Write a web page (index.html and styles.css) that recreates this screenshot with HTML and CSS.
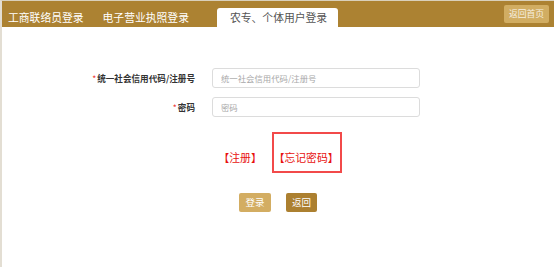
FILE: index.html
```html
<!DOCTYPE html>
<html lang="zh">
<head>
<meta charset="utf-8">
<link rel="stylesheet" href="styles.css">
</head>
<body>
<div class="page">
  <div class="topbar">
    <div class="tab tab-first">工商联络员登录</div>
    <div class="tab tab-second">电子营业执照登录</div>
    <div class="tab tab-active">农专、个体用户登录</div>
    <div class="spacer"></div>
    <button class="home-btn">返回首页</button>
  </div>
  <div class="content">
    <div class="form">
      <label class="label"><span class="req">*</span>统一社会信用代码/注册号</label>
      <input class="field" type="text" placeholder="统一社会信用代码/注册号">
      <label class="label"><span class="req">*</span>密码</label>
      <input class="field" type="password" placeholder="密码">
    </div>
    <div class="links">
      <a class="link">【注册】</a>
      <a class="link link-boxed">【忘记密码】</a>
    </div>
    <div class="actions">
      <button class="btn btn-login">登录</button>
      <button class="btn btn-back">返回</button>
    </div>
  </div>
</div>
</body>
</html>
```

FILE: styles.css
```css
* { box-sizing: border-box; }
html, body {
  margin: 0;
  padding: 0;
  background: #fff;
  font-family: "Noto Sans CJK SC", "Noto Sans", sans-serif;
}
.page {
  width: 554px;
  height: 267px;
  border-top: 1px solid #d9d0bb;
  border-left: 2px solid #e3ded3;
  overflow: hidden;
}
.topbar {
  height: 26px;
  margin-left: -2px;
  background: #ac8232;
  display: flex;
  align-items: flex-end;
}
.tab {
  font-size: 10.8px;
  line-height: 19px;
  height: 19px;
  color: #fff;
  white-space: nowrap;
}
.tab-first { margin-left: 8px; }
.tab-second { margin-left: 19px; }
.tab-active {
  margin-left: 28px;
  padding: 0 11px 0 13px;
  background: #fff;
  color: #555;
  border-radius: 3px 3px 0 0;
}
.spacer { flex: 1; }
.home-btn {
  align-self: flex-start;
  margin: 4px 5px 0 0;
  width: 45px;
  height: 18px;
  padding: 0;
  border: none;
  border-radius: 2px;
  background: #d1ad62;
  color: #f6efe0;
  font-family: inherit;
  font-size: 8.8px;
  line-height: 18px;
}
.content {
  padding-top: 41px;
}
.form {
  display: grid;
  grid-template-columns: 193px 208px;
  column-gap: 17px;
  row-gap: 9px;
  align-items: center;
}
.label {
  text-align: right;
  font-size: 8.6px;
  font-weight: bold;
  color: #333;
}
.req {
  color: #e33;
  font-weight: normal;
  margin-right: 1px;
}
.field {
  height: 20px;
  border: 1px solid #dcdcdc;
  border-radius: 3px;
  padding: 0 8px;
  font-family: inherit;
  font-size: 8.4px;
  color: #333;
  outline: none;
}
.field::placeholder { color: #a8a8a8; }
.links {
  margin-top: 15px;
  display: flex;
  justify-content: center;
  align-items: flex-end;
  padding-left: 5px;
  gap: 10px;
}
.link {
  color: #e8110f;
  font-size: 10.8px;
  line-height: 14px;
  padding-bottom: 9px;
}
.link-boxed {
  border: 2px solid #f24a4a;
  padding: 16px 2px 7px 0;
}
.actions {
  margin-top: 20px;
  display: flex;
  justify-content: center;
  gap: 15px;
}
.btn {
  height: 19px;
  padding: 0;
  border: none;
  border-radius: 2px;
  color: #fff;
  font-family: inherit;
  font-size: 9.5px;
  line-height: 19px;
}
.btn-login { width: 32px; background: #d3ad62; }
.btn-back { width: 31px; background: #ac8030; }
```
